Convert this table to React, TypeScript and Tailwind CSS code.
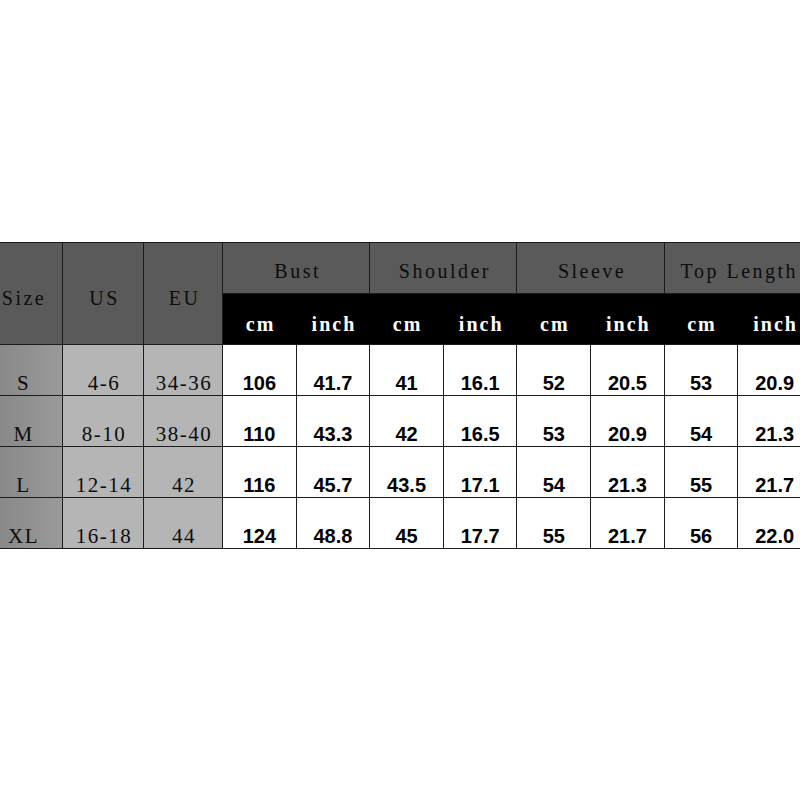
import React from 'react';

type Row = { size: string; us: string; eu: string; vals: string[] };

const rows: Row[] = [
  { size: 'S', us: '4-6', eu: '34-36', vals: ['106', '41.7', '41', '16.1', '52', '20.5', '53', '20.9'] },
  { size: 'M', us: '8-10', eu: '38-40', vals: ['110', '43.3', '42', '16.5', '53', '20.9', '54', '21.3'] },
  { size: 'L', us: '12-14', eu: '42', vals: ['116', '45.7', '43.5', '17.1', '54', '21.3', '55', '21.7'] },
  { size: 'XL', us: '16-18', eu: '44', vals: ['124', '48.8', '45', '17.7', '55', '21.7', '56', '22.0'] },
];

const groups = ['Bust', 'Shoulder', 'Sleeve', 'Top Length'];

// thin serif with wide tracking, stands in for the SimSun-style latin of the source
const serif = "font-['Liberation_Serif','DejaVu_Serif',serif]";
const sans = "font-['Liberation_Sans',Arial,sans-serif]";

export default function App() {
  return (
    <div className="h-[800px] w-[800px] overflow-hidden bg-white pt-[242px]">
      <table className="ml-[-18px] w-[830px] table-fixed border-collapse text-center">
        <colgroup>
          <col className="w-[80px]" />
          <col className="w-[81px]" />
          <col className="w-[79px]" />
          {Array.from({ length: 8 }).map((_, i) => (
            <col key={i} className="w-[73.6px]" />
          ))}
        </colgroup>
        <thead>
          <tr className="h-[51px]">
            {['Size', 'US', 'EU'].map((h) => (
              <th
                key={h}
                rowSpan={2}
                className={`${serif} border border-[#1c1c1c] bg-[#5a5a5a] pl-[3px] pt-[8px] align-middle text-[20px] font-normal leading-[24px] tracking-[2.5px] text-[#0d0d0d]`}
              >
                {h}
              </th>
            ))}
            {groups.map((g) => (
              <th
                key={g}
                colSpan={2}
                className={`${serif} whitespace-nowrap border border-[#1c1c1c] bg-[#5a5a5a] pl-[3px] pt-[5px] align-middle text-[20px] font-normal leading-[24px] tracking-[2.5px] text-[#0d0d0d]`}
              >
                {g}
              </th>
            ))}
          </tr>
          <tr className="h-[51px] bg-black">
            {groups.flatMap((g) =>
              ['cm', 'inch'].map((u) => (
                <th
                  key={g + u}
                  className={`${serif} bg-black pl-[2px] pt-[10px] align-middle text-[20px] font-bold leading-[24px] tracking-[2px] text-white`}
                >
                  {u}
                </th>
              ))
            )}
          </tr>
        </thead>
        <tbody>
          {rows.map((r) => (
            <tr key={r.size} className="h-[51px]">
              <td className={`${serif} border border-[#1c1c1c] bg-gradient-to-r from-[#848484] to-[#9a9a9a] pl-[2px] align-bottom text-[21px] leading-[24px] tracking-[1.5px] text-[#0d0d0d]`}>
                {r.size}
              </td>
              <td className={`${serif} border border-[#1c1c1c] bg-[#b5b5b5] pl-[2px] align-bottom text-[21px] leading-[24px] tracking-[1.5px] text-[#0d0d0d]`}>
                {r.us}
              </td>
              <td className={`${serif} border border-[#1c1c1c] bg-[#b5b5b5] pl-[2px] align-bottom text-[21px] leading-[24px] tracking-[1.5px] text-[#0d0d0d]`}>
                {r.eu}
              </td>
              {r.vals.map((v, i) => (
                <td
                  key={i}
                  className={`${sans} border border-[#1c1c1c] bg-white align-bottom text-[20px] font-bold leading-[24px] text-black`}
                >
                  {v}
                </td>
              ))}
            </tr>
          ))}
        </tbody>
      </table>
    </div>
  );
}
